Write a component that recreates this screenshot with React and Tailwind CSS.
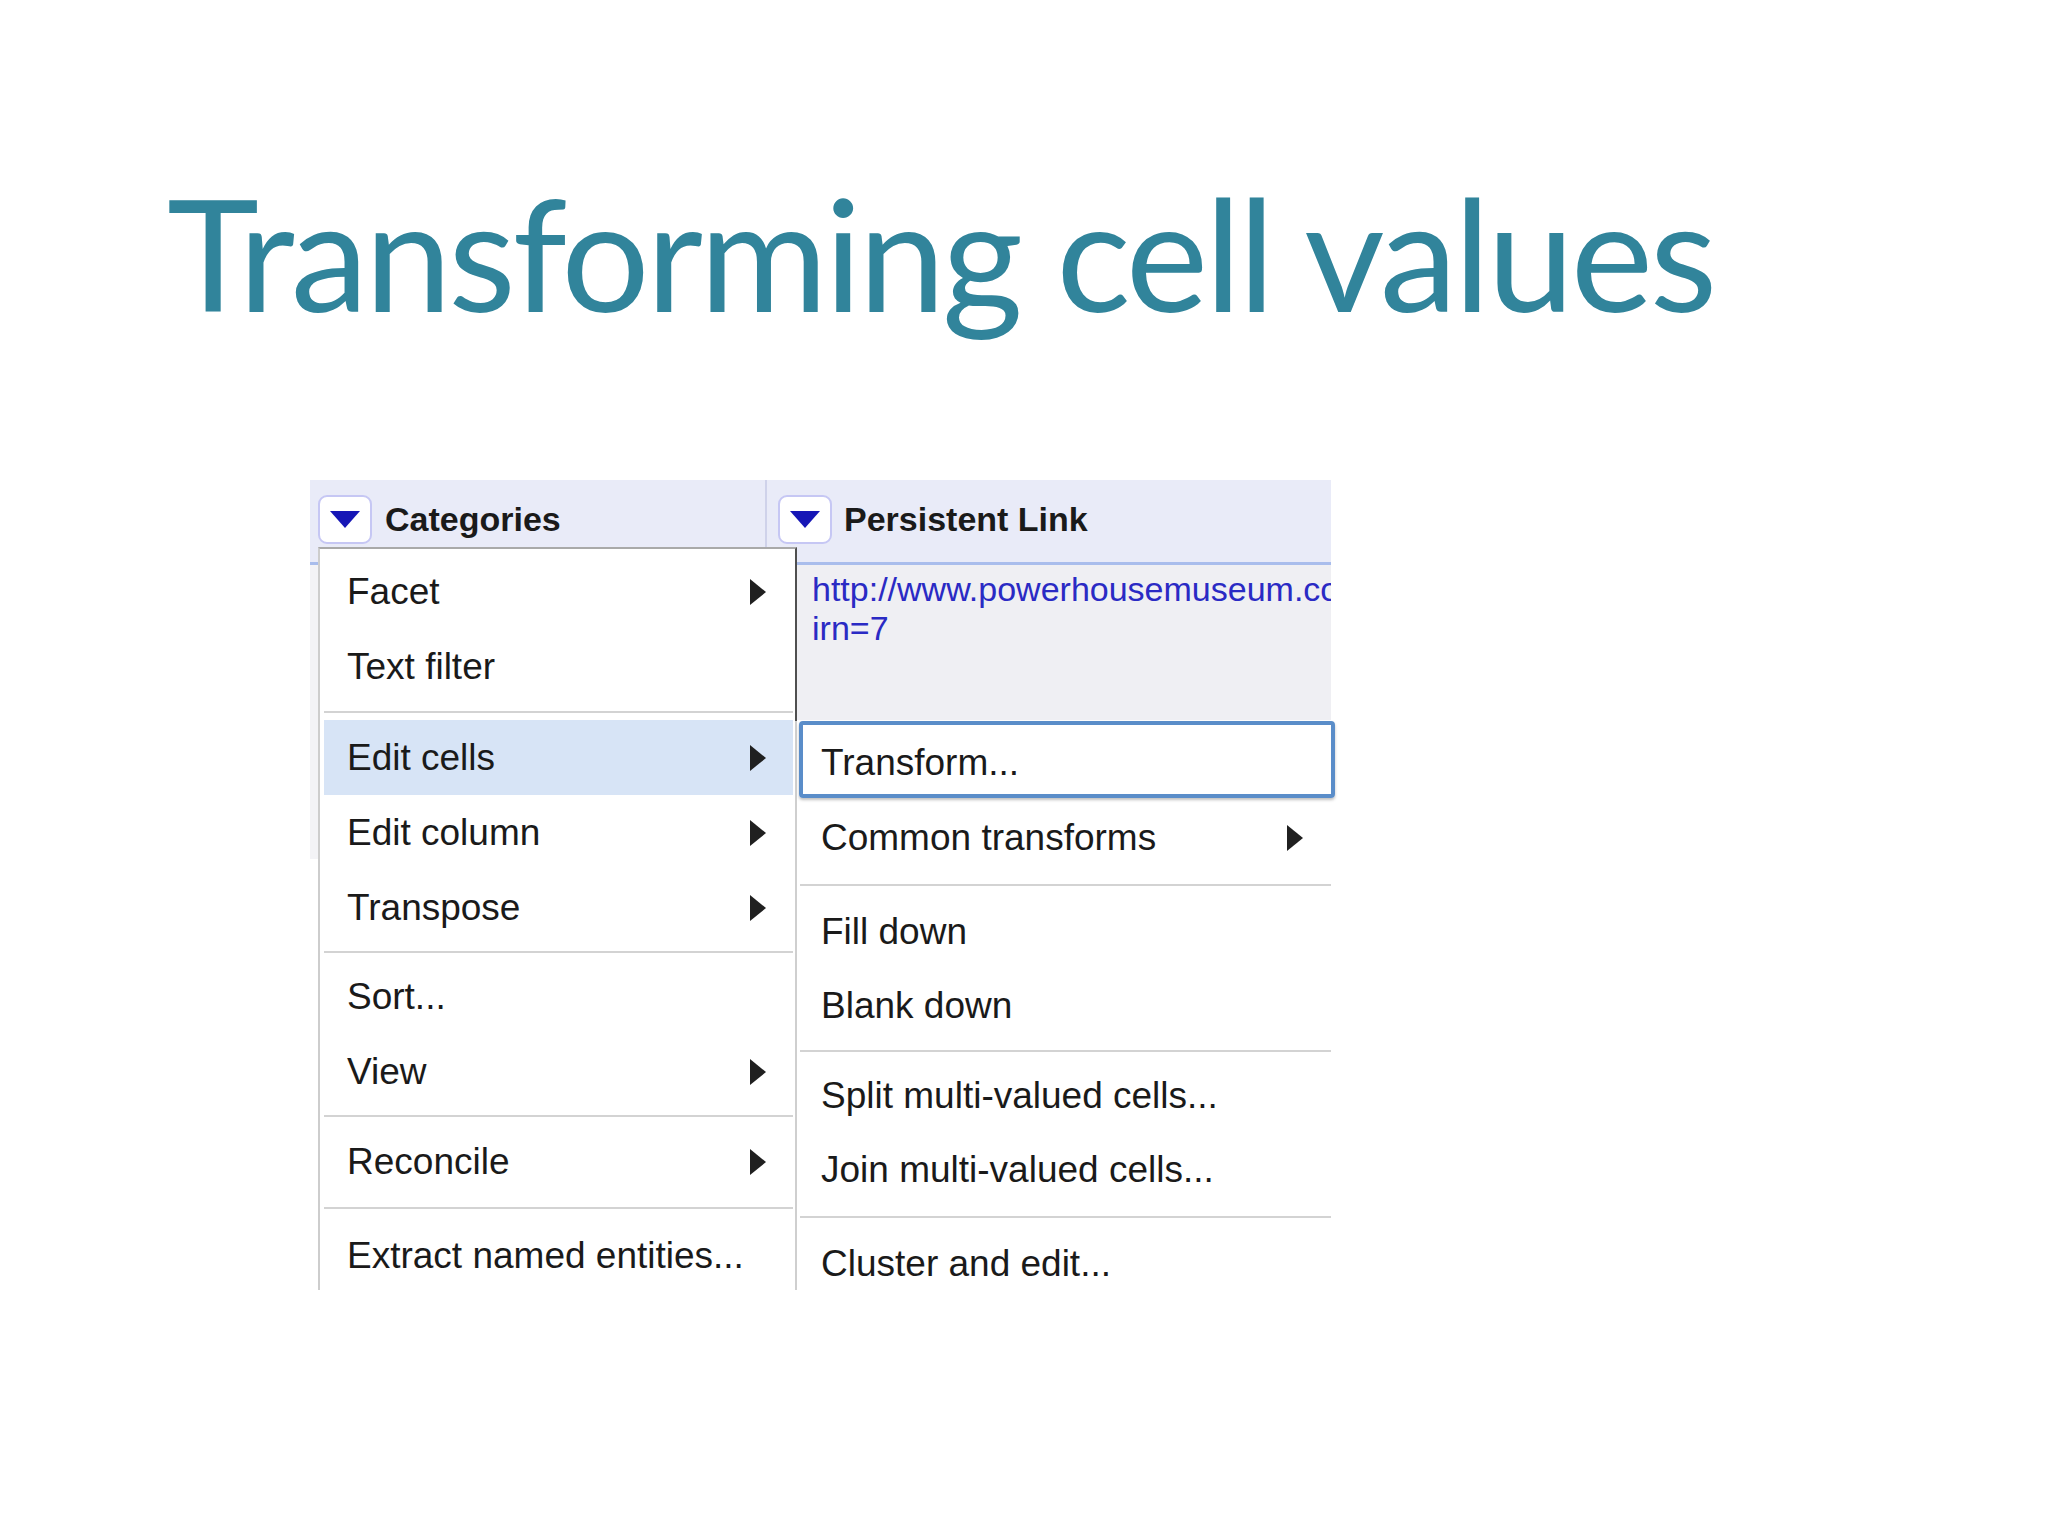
const SEP_L = 'h-[2px] bg-[#d3d3d3]'

const LEFT_MENU = [
  { label: 'Facet', sub: true },
  { label: 'Text filter' },
  { sep: 'my-[7px]' },
  { label: 'Edit cells', sub: true, active: true },
  { label: 'Edit column', sub: true },
  { label: 'Transpose', sub: true },
  { sep: 'my-[6px]' },
  { label: 'Sort...' },
  { label: 'View', sub: true },
  { sep: 'mt-[6px] mb-[7px]' },
  { label: 'Reconcile', sub: true },
  { sep: 'mt-[8px] mb-[9px]' },
  { label: 'Extract named entities...' },
]

const SUB_MENU = [
  { label: 'Common transforms', sub: true, extra: 'mt-[3px]' },
  { sep: 'ml-[3px] my-[9px]' },
  { label: 'Fill down' },
  { label: 'Blank down' },
  { sep: 'ml-[3px] my-[7px]' },
  { label: 'Split multi-valued cells...' },
  { label: 'Join multi-valued cells...' },
  { sep: 'ml-[3px] my-[9px]' },
  { label: 'Cluster and edit...' },
]

function SubArrow() {
  return (
    <svg width="16" height="26" viewBox="0 0 16 26" className="shrink-0">
      <polygon points="0,0 16,13 0,26" fill="#202020" />
    </svg>
  )
}

function DropButton() {
  return (
    <div className="w-[54px] h-[49px] shrink-0 rounded-[9px] border-2 border-[#c6c7f4] bg-white flex items-center justify-center">
      <svg width="30" height="17" viewBox="0 0 30 17">
        <polygon points="0,0 30,0 15,17" fill="#1616b6" />
      </svg>
    </div>
  )
}

function MenuRows({ items, rowH, pl, pr }) {
  return items.map((it, i) => {
    if (it.sep) return <div key={i} className={SEP_L + ' ' + it.sep} />
    return (
      <div
        key={i}
        className={
          'flex items-center justify-between ' +
          rowH + ' ' + pl + ' ' + pr + ' ' +
          (it.extra || '') + ' ' +
          (it.active ? 'bg-[#d7e4f6]' : '')
        }
      >
        <span>{it.label}</span>
        {it.sub && <SubArrow />}
      </div>
    )
  })
}

export default function App() {
  return (
    <div className="w-[2048px] h-[1536px] bg-white overflow-hidden font-['Liberation_Sans',Arial,sans-serif]">
      <h1 className="pt-[174px] pl-[167px] text-[156px] leading-none tracking-[-0.022em] text-[#31849b] font-['Lato',sans-serif] font-normal whitespace-nowrap">
        Transforming cell values
      </h1>

      {/* OpenRefine column menu screenshot */}
      <div className="relative mt-[150px] ml-[310px] w-[1021px] text-[37px] text-[#1a1a1a]">
        <div className="flex h-[85px] bg-[#e9ebf8] border-b-[3px] border-[#a9bdec]">
          <div className="w-[457px] flex items-center gap-[13px] pl-[8px] pb-[3px] border-r-2 border-[#cfd2ea]">
            <DropButton />
            <span className="text-[34px] font-bold">Categories</span>
          </div>
          <div className="flex-1 flex items-center gap-[12px] pl-[11px] pb-[3px]">
            <DropButton />
            <span className="text-[34px] font-bold">Persistent Link</span>
          </div>
        </div>

        <div className="flex">
          <div className="w-[487px] h-[294px] bg-[#f3f3f6]" />
          <div className="flex-1 h-[155px] bg-[#efeff3] pt-[5px] pl-[15px] overflow-hidden text-[34px] leading-[39px] text-[#2a2ac4] whitespace-nowrap">
            <div>http://www.powerhousemuseum.com/collection/database/?</div>
            <div>irn=7</div>
          </div>
        </div>

        {/* column dropdown */}
        <div className="absolute left-[8px] top-[67px] w-[479px] h-[743px] bg-white border-t-2 border-l-2 border-r-2 border-t-[#a9a9a9] border-l-[#cdcdcd] border-r-[#4f4f4f] pt-[5px] pl-[4px] pr-[2px]">
          <MenuRows items={LEFT_MENU} rowH="h-[75px]" pl="pl-[23px]" pr="pr-[27px]" />
        </div>

        {/* Edit cells submenu */}
        <div className="absolute left-[485px] top-[241px] w-[536px] h-[569px] bg-white border-l-2 border-[#cfcfcf]">
          <div className="ml-[2px] -mr-[4px] h-[77px] border-4 border-[#5a8dc9] rounded-[4px] shadow-[0_2px_3px_rgba(0,0,0,0.25)] flex items-center pl-[18px] pt-[7px]">
            Transform...
          </div>
          <MenuRows items={SUB_MENU} rowH="h-[74px]" pl="pl-[24px]" pr="pr-[28px]" />
        </div>
      </div>
    </div>
  )
}
